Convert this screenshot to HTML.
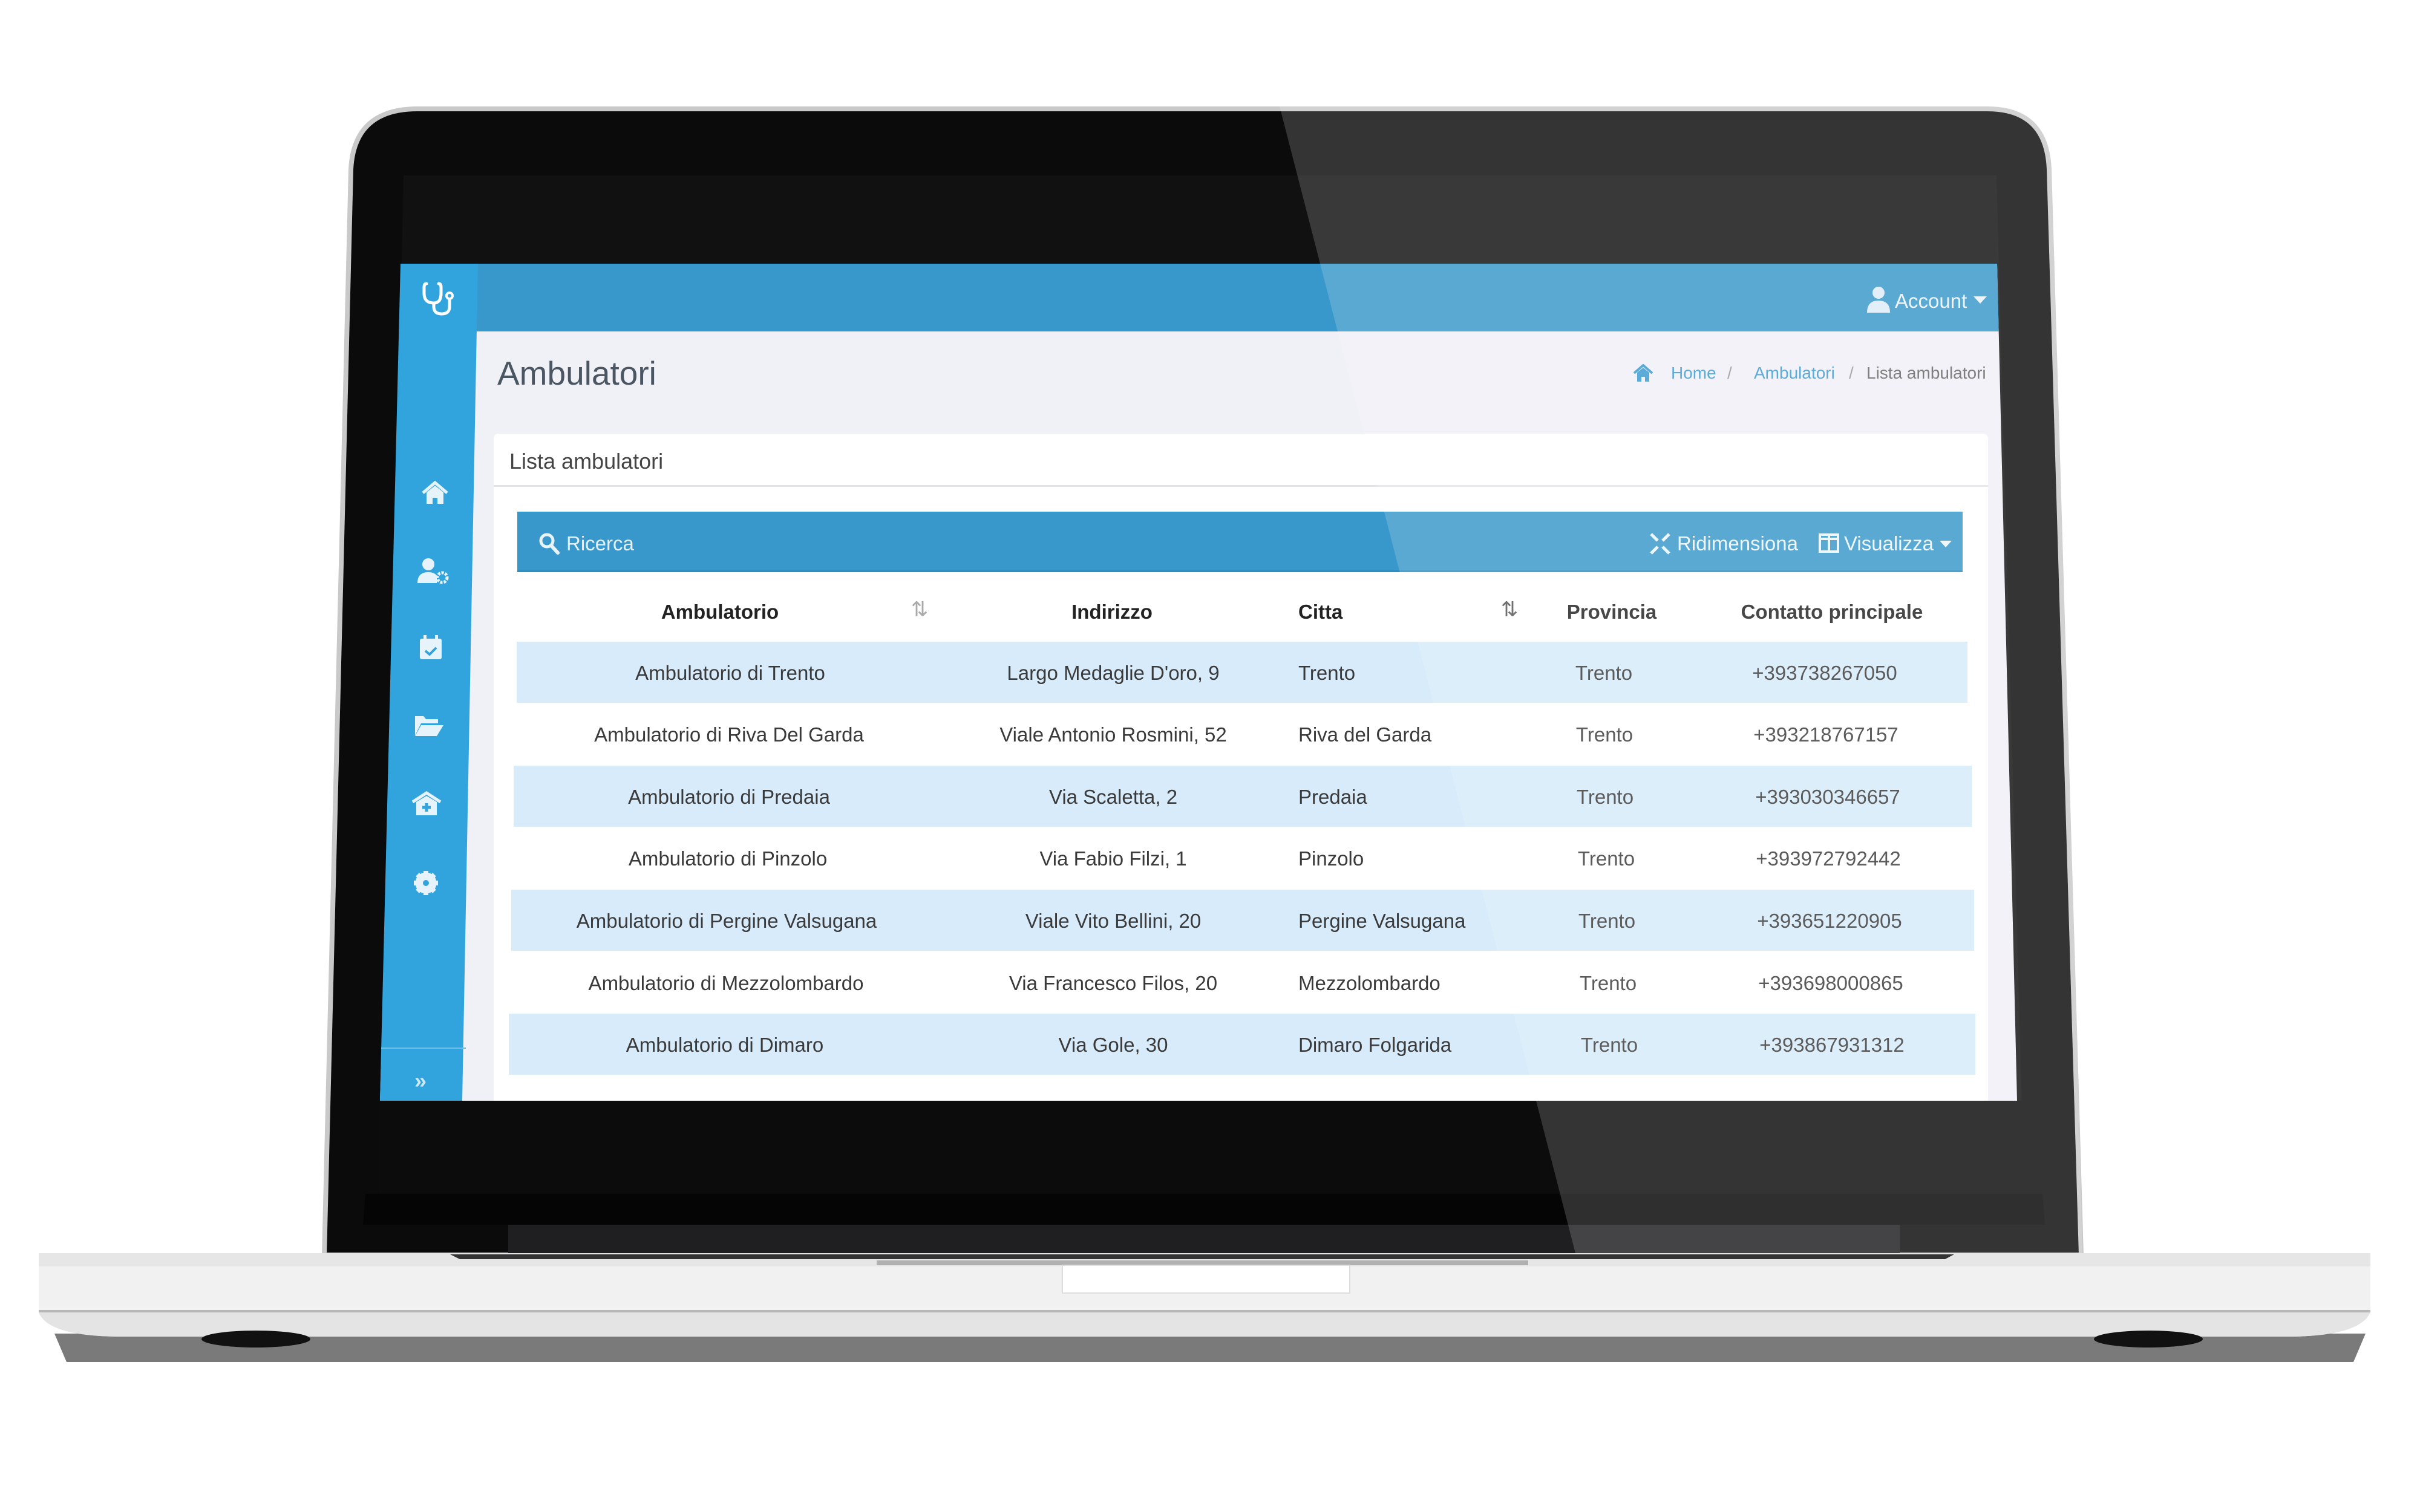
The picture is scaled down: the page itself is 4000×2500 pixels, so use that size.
<!DOCTYPE html>
<html><head><meta charset="utf-8"><style>
*{margin:0;padding:0;box-sizing:border-box}
body{width:4000px;height:2500px;background:#fff;position:relative;overflow:hidden;font-family:"Liberation Sans",Arial,sans-serif}
.a{position:absolute;white-space:nowrap}
.c{position:absolute;white-space:nowrap;transform:translate(-50%,-50%)}
.l{position:absolute;white-space:nowrap;transform:translateY(-50%)}
.row{position:absolute;height:101px;background:#d7ebfb}
.t{font-size:33px;color:#3a3a3a}
.h{font-size:33px;font-weight:bold;color:#222}
</style></head><body>
<svg class="a" style="left:0;top:0" width="4000" height="2500" viewBox="0 0 4000 2500">
  <path d="M90 2205 L3910 2205 L3890 2252 L110 2252 Z" fill="#7a7a7a"/>
  <path d="M690 180 L3285 180 Q3383 180 3387 280 L3440 2075 L536 2075 L580 280 Q585 180 690 180 Z" fill="#0b0b0b" stroke="#c9c9c9" stroke-width="8"/>
  <path d="M667 290 L3300 290 L3346 1974 L628 1974 Z" fill="#111"/>
  <rect x="840" y="2025" width="2300" height="50" fill="#1f1f21"/>
  <path d="M64 2072 L3918 2072 L3918 2168 Q3900 2210 3780 2210 L200 2210 Q80 2210 64 2168 Z" fill="#f1f1f1"/>
  <rect x="64" y="2072" width="3854" height="22" fill="#e6e6e6"/>
  <rect x="64" y="2166" width="3854" height="4" fill="#b8b8b8"/>
  <path d="M64 2170 L3918 2170 Q3900 2210 3780 2210 L200 2210 Q80 2210 64 2170 Z" fill="#e4e4e4"/>
  <path d="M744 2074 L3230 2074 L3215 2082 L760 2082 Z" fill="#333"/>
  <rect x="1449" y="2084" width="1077" height="8" fill="#b0b0b0"/>
  <rect x="1756" y="2092" width="475" height="46" fill="#fff" stroke="#ddd" stroke-width="2"/>
  <ellipse cx="423" cy="2214" rx="90" ry="14" fill="#111"/>
  <ellipse cx="3551" cy="2214" rx="90" ry="14" fill="#111"/>
</svg>

<div class="a" style="left:628px;top:436px;width:2723px;height:1384px;clip-path:polygon(39px 0,2673px 0,2706px 1384px,0 1384px);background:#f0f0f7;overflow:hidden">
  <div class="a" style="left:0;top:0;width:2723px;height:112px;background:#3898cb"></div>
  <div class="a" style="left:188px;top:281px;width:2470px;height:1200px;background:#fff;border-radius:8px"></div>
  <div class="a" style="left:188px;top:366px;width:2470px;height:3px;background:#e4e4e8"></div>
  <div class="a" style="left:227px;top:410px;width:2389px;height:100px;background:#3898cb;border-bottom:3px solid #2d8cc0"></div>
</div>
<div class="a" style="left:628px;top:436px;width:164px;height:1384px;clip-path:polygon(34px 0,162px 0,136px 1384px,0 1384px);background:#31a4de"></div>
<div class="a" style="left:630px;top:1732px;width:140px;height:2px;background:#6dbfe8"></div>

<svg class="a" style="left:697px;top:463px" width="58" height="60" viewBox="0 0 58 60"><path d="M8 6 Q4 6 4 12 L4 22 Q4 38 20 38 Q32 38 32 22 L32 12 Q32 6 28 6" fill="none" stroke="#fff" stroke-width="5" stroke-linecap="round"/><path d="M20 38 L20 44 Q20 56 33 56 Q46 56 46 44 L46 30" fill="none" stroke="#fff" stroke-width="5"/><circle cx="46" cy="26" r="5" fill="none" stroke="#fff" stroke-width="4"/></svg>

<svg class="a" style="left:696px;top:795px" width="46" height="40" viewBox="0 0 46 40"><path d="M3 20 L23 3 L43 20" fill="none" stroke="#e6f3fb" stroke-width="5"/><path d="M9 19 L23 8 L37 19 L37 38 L27 38 L27 28 L19 28 L19 38 L9 38 Z" fill="#e6f3fb"/></svg>
<svg class="a" style="left:690px;top:922px" width="52" height="44" viewBox="0 0 52 44"><circle cx="18" cy="11" r="10" fill="#e6f3fb"/><path d="M0 42 Q0 24 18 24 Q28 24 32 30 L32 42 Z" fill="#e6f3fb"/><circle cx="41" cy="33" r="8" fill="none" stroke="#e6f3fb" stroke-width="5" stroke-dasharray="4 2"/></svg>
<svg class="a" style="left:692px;top:1050px" width="40" height="42" viewBox="0 0 40 42"><rect x="2" y="6" width="36" height="34" rx="3" fill="#e6f3fb"/><rect x="8" y="0" width="5" height="10" fill="#e6f3fb"/><rect x="27" y="0" width="5" height="10" fill="#e6f3fb"/><path d="M11 26 L18 32 L29 21" fill="none" stroke="#31a4de" stroke-width="4"/></svg>
<svg class="a" style="left:684px;top:1182px" width="50" height="36" viewBox="0 0 50 36"><path d="M2 2 L16 2 L20 7 L40 7 L40 14 L12 14 L2 34 Z" fill="#e6f3fb"/><path d="M12 17 L49 17 L38 35 L2 35 Z" fill="#e6f3fb"/></svg>
<svg class="a" style="left:680px;top:1308px" width="50" height="42" viewBox="0 0 50 42"><path d="M2 18 L25 3 L48 18" fill="none" stroke="#e6f3fb" stroke-width="5"/><path d="M8 18 L25 8 L42 18 L42 40 L8 40 Z" fill="#e6f3fb"/><path d="M25 20 L25 34 M18 27 L32 27" stroke="#31a4de" stroke-width="5"/></svg>
<svg class="a" style="left:682px;top:1438px" width="44" height="44" viewBox="0 0 44 44"><circle cx="22" cy="22" r="13" fill="none" stroke="#e6f3fb" stroke-width="9"/><g stroke="#e6f3fb" stroke-width="8"><path d="M22 2 L22 42 M2 22 L42 22 M8 8 L36 36 M36 8 L8 36"/></g><circle cx="22" cy="22" r="5" fill="#31a4de"/></svg>
<div class="c" style="left:695px;top:1787px;font-size:36px;color:#cde9f8;font-weight:bold">»</div>

<svg class="a" style="left:3085px;top:473px" width="40" height="44" viewBox="0 0 40 44"><circle cx="20" cy="11" r="10" fill="#dcecf7"/><path d="M1 44 Q1 24 20 24 Q39 24 39 44 Z" fill="#dcecf7"/></svg>
<div class="l" style="left:3132px;top:498px;font-size:33px;color:#e8f2f9">Account</div>
<svg class="a" style="left:3262px;top:490px" width="22" height="14"><path d="M0 0 L22 0 L11 12 Z" fill="#e8f2f9"/></svg>

<div class="l" style="left:822px;top:617px;font-size:55px;color:#4b5663">Ambulatori</div>
<svg class="a" style="left:2700px;top:602px" width="32" height="30" viewBox="0 0 32 30"><path d="M1 15 L16 2 L31 15" fill="none" stroke="#3a9bd0" stroke-width="4"/><path d="M6 14 L16 6 L26 14 L26 29 L19 29 L19 21 L13 21 L13 29 L6 29 Z" fill="#3a9bd0"/></svg>
<div class="l" style="left:2762px;top:617px;font-size:28px;color:#3a9bd0">Home</div>
<div class="l" style="left:2855px;top:617px;font-size:28px;color:#999">/</div>
<div class="l" style="left:2899px;top:617px;font-size:28px;color:#3a9bd0">Ambulatori</div>
<div class="l" style="left:3056px;top:617px;font-size:28px;color:#999">/</div>
<div class="l" style="left:3085px;top:617px;font-size:28px;color:#666">Lista ambulatori</div>

<div class="l" style="left:842px;top:763px;font-size:36px;color:#444">Lista ambulatori</div>

<svg class="a" style="left:890px;top:880px" width="36" height="38" viewBox="0 0 36 38"><circle cx="14" cy="14" r="10" fill="none" stroke="#e8f2f9" stroke-width="5"/><path d="M21 22 L32 34" stroke="#e8f2f9" stroke-width="6" stroke-linecap="round"/></svg>
<div class="l" style="left:936px;top:899px;font-size:33px;color:#e4f0f8">Ricerca</div>
<svg class="a" style="left:2726px;top:880px" width="36" height="38" viewBox="0 0 36 38"><g stroke="#eaf4fa" stroke-width="5"><path d="M3 3 L14 14 M33 3 L22 14 M3 35 L14 24 M33 35 L22 24"/></g></svg>
<div class="l" style="left:2772px;top:899px;font-size:33px;color:#eaf4fa">Ridimensiona</div>
<svg class="a" style="left:3006px;top:882px" width="34" height="32" viewBox="0 0 34 32"><rect x="2" y="2" width="30" height="28" fill="none" stroke="#eaf4fa" stroke-width="4"/><path d="M17 2 L17 30 M2 9 L32 9" stroke="#eaf4fa" stroke-width="4"/></svg>
<div class="l" style="left:3048px;top:899px;font-size:33px;color:#eaf4fa">Visualizza</div>
<svg class="a" style="left:3206px;top:894px" width="20" height="12"><path d="M0 0 L20 0 L10 11 Z" fill="#eaf4fa"/></svg>

<div class="c h" style="left:1190px;top:1012px">Ambulatorio</div>
<div class="c" style="left:1520px;top:1008px;font-size:34px;color:#aaa">⇅</div>
<div class="c h" style="left:1838px;top:1012px">Indirizzo</div>
<div class="l h" style="left:2146px;top:1012px">Citta</div>
<div class="c" style="left:2495px;top:1008px;font-size:34px;color:#555">⇅</div>
<div class="c h" style="left:2664px;top:1012px">Provincia</div>
<div class="c h" style="left:3028px;top:1012px">Contatto principale</div>

<div class="row" style="left:854px;top:1061px;width:2398px"></div>
<div class="row" style="left:849px;top:1266px;width:2410px"></div>
<div class="row" style="left:845px;top:1471px;width:2418px"></div>
<div class="row" style="left:841px;top:1676px;width:2424px"></div>

<div class="c t" style="left:1207px;top:1113px">Ambulatorio di Trento</div>
<div class="c t" style="left:1840px;top:1113px">Largo Medaglie D'oro, 9</div>
<div class="l t" style="left:2146px;top:1113px">Trento</div>
<div class="c t" style="left:2651px;top:1113px">Trento</div>
<div class="c t" style="left:3016px;top:1113px">+393738267050</div>

<div class="c t" style="left:1205px;top:1215px">Ambulatorio di Riva Del Garda</div>
<div class="c t" style="left:1840px;top:1215px">Viale Antonio Rosmini, 52</div>
<div class="l t" style="left:2146px;top:1215px">Riva del Garda</div>
<div class="c t" style="left:2652px;top:1215px">Trento</div>
<div class="c t" style="left:3018px;top:1215px">+393218767157</div>

<div class="c t" style="left:1205px;top:1318px">Ambulatorio di Predaia</div>
<div class="c t" style="left:1840px;top:1318px">Via Scaletta, 2</div>
<div class="l t" style="left:2146px;top:1318px">Predaia</div>
<div class="c t" style="left:2653px;top:1318px">Trento</div>
<div class="c t" style="left:3021px;top:1318px">+393030346657</div>

<div class="c t" style="left:1203px;top:1420px">Ambulatorio di Pinzolo</div>
<div class="c t" style="left:1840px;top:1420px">Via Fabio Filzi, 1</div>
<div class="l t" style="left:2146px;top:1420px">Pinzolo</div>
<div class="c t" style="left:2655px;top:1420px">Trento</div>
<div class="c t" style="left:3022px;top:1420px">+393972792442</div>

<div class="c t" style="left:1201px;top:1523px">Ambulatorio di Pergine Valsugana</div>
<div class="c t" style="left:1840px;top:1523px">Viale Vito Bellini, 20</div>
<div class="l t" style="left:2146px;top:1523px">Pergine Valsugana</div>
<div class="c t" style="left:2656px;top:1523px">Trento</div>
<div class="c t" style="left:3024px;top:1523px">+393651220905</div>

<div class="c t" style="left:1200px;top:1626px">Ambulatorio di Mezzolombardo</div>
<div class="c t" style="left:1840px;top:1626px">Via Francesco Filos, 20</div>
<div class="l t" style="left:2146px;top:1626px">Mezzolombardo</div>
<div class="c t" style="left:2658px;top:1626px">Trento</div>
<div class="c t" style="left:3026px;top:1626px">+393698000865</div>

<div class="c t" style="left:1198px;top:1728px">Ambulatorio di Dimaro</div>
<div class="c t" style="left:1840px;top:1728px">Via Gole, 30</div>
<div class="l t" style="left:2146px;top:1728px">Dimaro Folgarida</div>
<div class="c t" style="left:2660px;top:1728px">Trento</div>
<div class="c t" style="left:3028px;top:1728px">+393867931312</div>

<svg class="a" style="left:0;top:0" width="4000" height="2500" viewBox="0 0 4000 2500">
  <path d="M628 1820 L3346 1820 L3350 1974 L626 1974 Z" fill="#0c0c0c"/>
  <path d="M604 1974 L3376 1974 L3380 2025 L600 2025 Z" fill="#050505"/>
  <path d="M2115 176 L3395 176 L3442 2072 L2604 2072 Z" fill="rgba(255,255,255,0.17)"/>
</svg>
</body></html>
